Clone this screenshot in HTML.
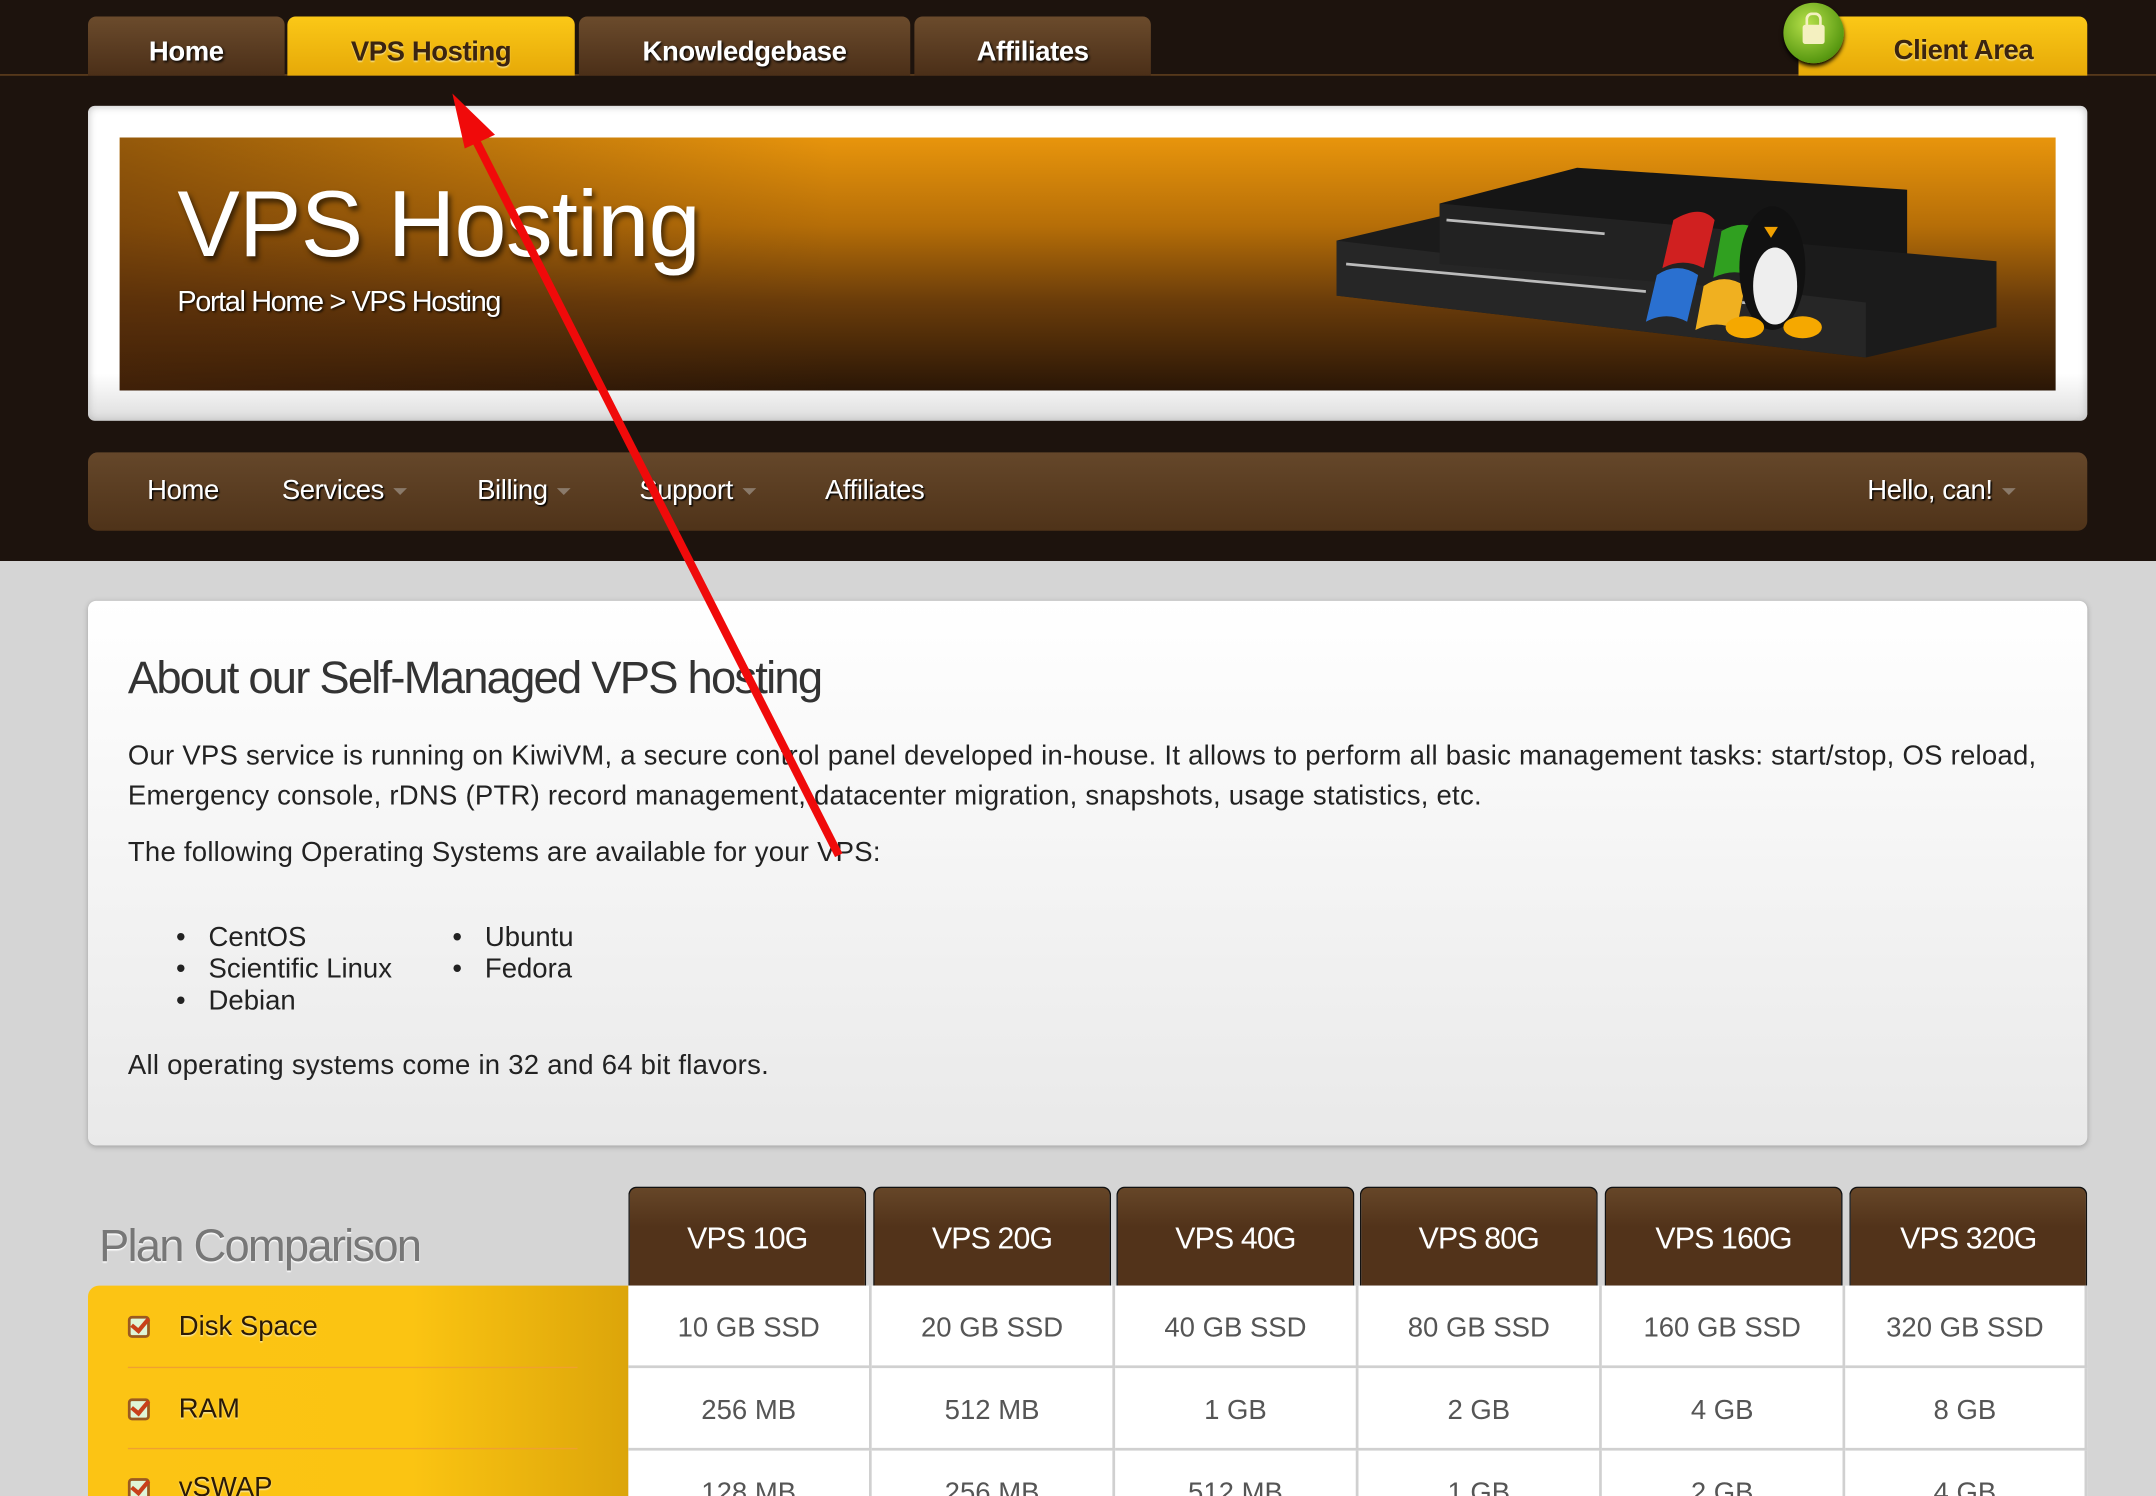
<!DOCTYPE html>
<html><head><meta charset="utf-8"><style>
html,body{margin:0;padding:0;width:2156px;height:1496px;overflow:hidden;background:#d5d5d5}
#w{position:absolute;left:0;top:0;width:1568px;height:1088px;transform:scale(1.375);transform-origin:0 0;font-family:"Liberation Sans",Arial,sans-serif;background:#d5d5d5;overflow:hidden}
.top{position:absolute;left:0;top:0;width:1568px;height:408px;background:#1d130d}
.line{position:absolute;left:0;top:54px;width:1568px;height:1px;background:#6a4420}
.tab{position:absolute;top:12px;height:43px;border-radius:6px 6px 0 0;background:linear-gradient(#6b4b2c,#4b2f18);color:#fff;font-weight:bold;font-size:20px;text-align:center;line-height:52px;text-shadow:1px 1px 2px #000;letter-spacing:-.3px}
.tab.y{background:linear-gradient(#fbc817,#e6a908);color:#3b2410;text-shadow:0 1px 1px #f7e08a}
.abs{position:absolute}
.nav{position:absolute;left:64px;top:329px;width:1454px;height:57px;border-radius:7px;background:linear-gradient(#65472a,#4f3319)}
.nav span{position:absolute;top:17px;color:#fff;font-size:20px;text-shadow:1px 1px 1px #000;letter-spacing:-.3px}
.car{display:inline-block;width:0;height:0;border-left:5px solid transparent;border-right:5px solid transparent;border-top:5px solid #8a7a6a;margin-left:7px;vertical-align:middle}
.card{position:absolute;left:64px;top:437px;width:1454px;height:396px;border-radius:6px;background:linear-gradient(#fff,#e9e9e9);box-shadow:0 1px 4px rgba(0,0,0,.25)}
.card p,.card div{position:absolute;margin:0;color:#222;font-size:20px}
.hd{position:absolute;top:863px;width:173px;height:72px;background:linear-gradient(#664628,#52331a 40%,#52331a);border:1.5px solid #111;border-bottom:none;border-radius:6px 6px 0 0;color:#fff;font-size:22px;text-align:center;line-height:74px;box-sizing:border-box;letter-spacing:-.6px}
.cell{position:absolute;width:177px;height:60px;background:#fff;border-right:2px solid #d0d0d0;border-bottom:2px solid #d0d0d0;box-sizing:border-box;text-align:center;line-height:62px;color:#555;font-size:20px}
.lab{position:absolute;left:130px;font-size:20px;color:#2b1a06;text-shadow:0 1px 1px #f8e6a0}
.chk{position:absolute;left:93px;width:16px;height:16px;border:2px solid #9a5a20;border-radius:3px;background:#dff5d8;box-sizing:border-box}
.chk:after{content:"";position:absolute;left:3px;top:-3px;width:5px;height:10px;border-right:3px solid #c8401a;border-bottom:3px solid #c8401a;transform:rotate(40deg)}
.sep{position:absolute;left:93px;width:327px;height:1px;background:#f0a030}
</style></head><body><div id="w">
<div class="top"></div>
<div class="line"></div>
<div class="tab" style="left:64px;width:143px">Home</div>
<div class="tab y" style="left:209px;width:209px">VPS Hosting</div>
<div class="tab" style="left:421px;width:241px">Knowledgebase</div>
<div class="tab" style="left:665px;width:172px">Affiliates</div>
<div class="tab y" style="left:1308px;width:210px;top:12px;line-height:50px;padding-left:30px;box-sizing:border-box">Client Area</div>
<div class="abs" style="left:1297px;top:2px;width:44px;height:44px;border-radius:50%;background:radial-gradient(circle at 40% 35%,#b6e04a,#5a9a12 70%,#3c6a08);box-shadow:0 2px 3px #000"></div>
<div class="abs" style="left:1311px;top:18px;width:16px;height:14px;background:#f4f0c0;border-radius:2px"></div>
<div class="abs" style="left:1313px;top:9px;width:8px;height:10px;border:2px solid #f4f0c0;border-bottom:none;border-radius:5px 5px 0 0"></div>

<div class="abs" style="left:64px;top:77px;width:1454px;height:229px;border-radius:5px;background:linear-gradient(#fff,#fff 85%,#ddd);box-shadow:inset 0 0 6px #bbb"></div>
<div class="abs" style="left:87px;top:100px;width:1408px;height:184px;background:linear-gradient(#e8950c,#b66e08 35%,#6a3c0a 65%,#2a1606);overflow:hidden">
 <div class="abs" style="left:0;top:0;width:520px;height:184px;background:linear-gradient(90deg,rgba(80,40,10,.55),rgba(80,40,10,0))"></div>
 <svg class="abs" style="left:880px;top:20px" width="500" height="150" viewBox="0 0 500 150">
  <polygon points="80,28 180,2 420,18 420,85 300,115 80,72" fill="#151515"/>
  <polygon points="5,55 90,35 485,70 485,118 390,140 5,95" fill="#1b1b1b"/>
  <polygon points="5,55 390,100 390,140 5,95" fill="#262626"/>
  <polygon points="80,28 300,48 300,90 80,72" fill="#222"/>
  <g stroke="#bbb" stroke-width="2"><line x1="12" y1="72" x2="230" y2="92"/><line x1="85" y1="40" x2="200" y2="50"/><line x1="300" y1="100" x2="340" y2="103"/></g>
  <path d="M250 40 q20-12 30 0 l-8 35 q-15-8-30 0z" fill="#d02020"/>
  <path d="M285 48 q18-10 30 2 l-6 32 q-14-8-30 0z" fill="#30a020"/>
  <path d="M238 80 q15-10 30 0 l-8 34 q-15-8-30 0z" fill="#2a70d0"/>
  <path d="M272 88 q15-10 30 0 l-6 32 q-14-8-30 0z" fill="#f0b020"/>
  <ellipse cx="322" cy="75" rx="24" ry="45" fill="#111"/>
  <ellipse cx="324" cy="88" rx="16" ry="28" fill="#eee"/>
  <path d="M316 45 l10 0 l-5 8z" fill="#f0a000"/>
  <ellipse cx="302" cy="118" rx="14" ry="8" fill="#f5a800"/>
  <ellipse cx="344" cy="118" rx="14" ry="8" fill="#f5a800"/>
 </svg>
 <div class="abs" style="left:42px;top:24px;color:#fff;font-size:68px;text-shadow:2px 3px 4px rgba(0,0,0,.6);letter-spacing:-.5px">VPS Hosting</div>
 <div class="abs" style="left:42px;top:108px;color:#fff;font-size:21px;text-shadow:1px 1px 2px #000;letter-spacing:-1px">Portal Home &gt; VPS Hosting</div>
</div>

<div class="nav">
 <span style="left:43px">Home</span>
 <span style="left:141px">Services<i class="car"></i></span>
 <span style="left:283px">Billing<i class="car"></i></span>
 <span style="left:401px">Support<i class="car"></i></span>
 <span style="left:536px">Affiliates</span>
 <span style="left:1294px">Hello, can!<i class="car"></i></span>
</div>

<div class="card">
 <div style="left:29px;top:37px;font-size:33px;color:#333;letter-spacing:-1.3px">About our Self-Managed VPS hosting</div>
 <p style="left:29px;top:99px;width:1420px;line-height:29px;letter-spacing:.18px">Our VPS service is running on KiwiVM, a secure control panel developed in-house. It allows to perform all basic management tasks: start/stop, OS reload, Emergency console, rDNS (PTR) record management, datacenter migration, snapshots, usage statistics, etc.</p>
 <p style="left:29px;top:172px;letter-spacing:.18px">The following Operating Systems are available for your VPS:</p>
 <div style="left:64px;top:234px;line-height:23px">•&nbsp;&nbsp;&nbsp;CentOS<br>•&nbsp;&nbsp;&nbsp;Scientific Linux<br>•&nbsp;&nbsp;&nbsp;Debian</div>
 <div style="left:265px;top:234px;line-height:23px">•&nbsp;&nbsp;&nbsp;Ubuntu<br>•&nbsp;&nbsp;&nbsp;Fedora</div>
 <p style="left:29px;top:327px;letter-spacing:.18px">All operating systems come in 32 and 64 bit flavors.</p>
</div>

<div class="abs" style="left:72px;top:887px;font-size:33px;color:#777;text-shadow:0 1px 1px #fff;letter-spacing:-1.3px">Plan Comparison</div>
<div class="abs" style="left:64px;top:935px;width:393px;height:160px;border-radius:8px 0 0 0;background:linear-gradient(90deg,#fcc414,#fbc412 60%,#dca50a)"></div>
<div class="chk" style="top:957px"></div><div class="lab" style="top:954px">Disk Space</div>
<div class="sep" style="top:994px"></div>
<div class="chk" style="top:1017px"></div><div class="lab" style="top:1014px">RAM</div>
<div class="sep" style="top:1053px"></div>
<div class="chk" style="top:1075px"></div><div class="lab" style="top:1071px">vSWAP</div>

<div class="hd" style="left:457px">VPS 10G</div>
<div class="hd" style="left:635px">VPS 20G</div>
<div class="hd" style="left:812px">VPS 40G</div>
<div class="hd" style="left:989px">VPS 80G</div>
<div class="hd" style="left:1167px">VPS 160G</div>
<div class="hd" style="left:1345px">VPS 320G</div>

<div class="cell" style="left:457px;top:935px">10 GB SSD</div>
<div class="cell" style="left:634px;top:935px">20 GB SSD</div>
<div class="cell" style="left:811px;top:935px">40 GB SSD</div>
<div class="cell" style="left:988px;top:935px">80 GB SSD</div>
<div class="cell" style="left:1165px;top:935px">160 GB SSD</div>
<div class="cell" style="left:1342px;top:935px;width:176px">320 GB SSD</div>
<div class="cell" style="left:457px;top:995px">256 MB</div>
<div class="cell" style="left:634px;top:995px">512 MB</div>
<div class="cell" style="left:811px;top:995px">1 GB</div>
<div class="cell" style="left:988px;top:995px">2 GB</div>
<div class="cell" style="left:1165px;top:995px">4 GB</div>
<div class="cell" style="left:1342px;top:995px;width:176px">8 GB</div>
<div class="cell" style="left:457px;top:1055px">128 MB</div>
<div class="cell" style="left:634px;top:1055px">256 MB</div>
<div class="cell" style="left:811px;top:1055px">512 MB</div>
<div class="cell" style="left:988px;top:1055px">1 GB</div>
<div class="cell" style="left:1165px;top:1055px">2 GB</div>
<div class="cell" style="left:1342px;top:1055px;width:176px">4 GB</div>

<svg class="abs" style="left:0;top:0" width="1568" height="1088">
 <line x1="345" y1="100" x2="610" y2="622" stroke="#f00a0a" stroke-width="6"/>
 <polygon points="329,68 360,98 338,108" fill="#f00a0a"/>
</svg>
</div></body></html>
